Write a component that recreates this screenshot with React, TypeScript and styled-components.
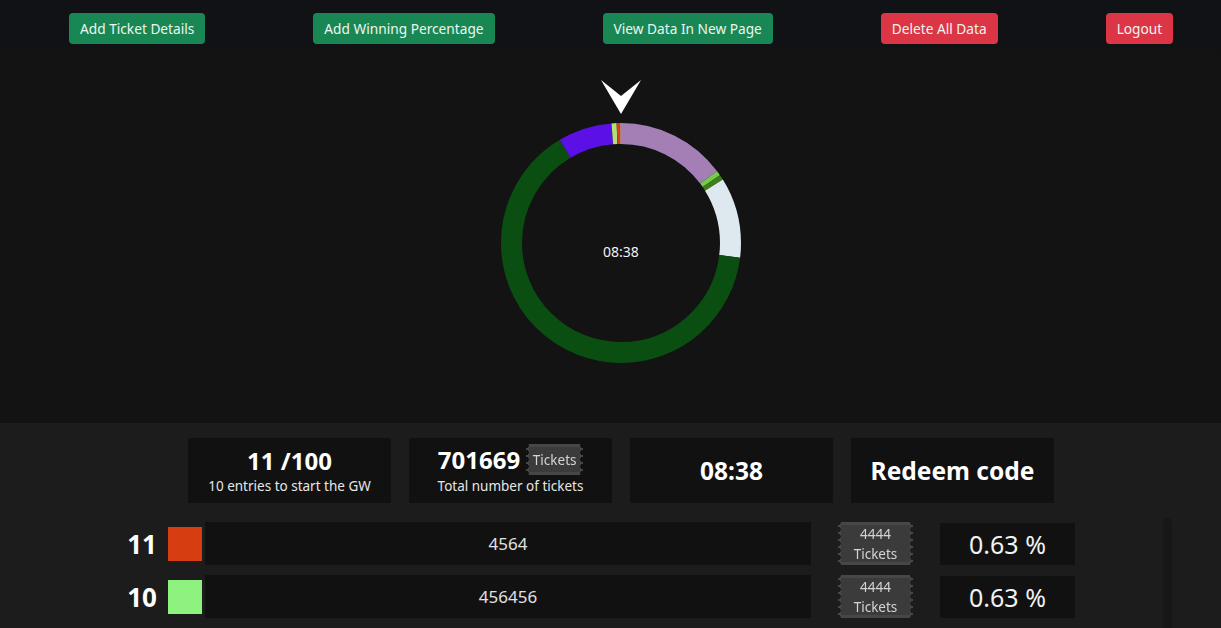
import styled, { createGlobalStyle } from "styled-components";

const GlobalStyle = createGlobalStyle`
  html, body {
    margin: 0;
    padding: 0;
    background: #131313;
    font-family: "Noto Sans", "Open Sans", sans-serif;
    color: #fff;
    overflow: hidden;
  }
  * { box-sizing: border-box; }
`;

const actions = [
  { label: "Add Ticket Details", tone: "success" },
  { label: "Add Winning Percentage", tone: "success" },
  { label: "View Data In New Page", tone: "success" },
  { label: "Delete All Data", tone: "danger" },
  { label: "Logout", tone: "danger" },
] as const;

// degrees, clockwise from top
const segments = [
  { from: 0, to: 53, color: "#a47fb6" },
  { from: 53, to: 55.5, color: "#74c94f" },
  { from: 55.5, to: 58, color: "#3f7d16" },
  { from: 58, to: 97, color: "#dde8ef" },
  { from: 97, to: 329, color: "#0a4e12" },
  { from: 329, to: 355, color: "#5b10e6" },
  { from: 355, to: 357.5, color: "#b3df78" },
  { from: 357.5, to: 359.4, color: "#dc3a18" },
  { from: 359.4, to: 360, color: "#f2eeee" },
];

const entries = [
  { no: 11, color: "#d63d10", value: "4564", tickets: 4444, pct: "0.63 %" },
  { no: 10, color: "#8ef27e", value: "456456", tickets: 4444, pct: "0.63 %" },
];

const RADIUS = 109.5;
const CIRC = 2 * Math.PI * RADIUS;

const Donut = () => (
  <DonutWrap>
    <svg width="240" height="240" viewBox="0 0 240 240">
      <g transform="rotate(-90 120 120)">
        {segments.map((s) => {
          const len = ((s.to - s.from) / 360) * CIRC;
          const offset = -(s.from / 360) * CIRC;
          return (
            <circle
              key={s.from}
              cx="120"
              cy="120"
              r={RADIUS}
              fill="none"
              stroke={s.color}
              strokeWidth="21"
              strokeDasharray={`${len} ${CIRC}`}
              strokeDashoffset={offset}
            />
          );
        })}
      </g>
    </svg>
    <DonutLabel>08:38</DonutLabel>
  </DonutWrap>
);

const App = () => {
  return (
    <>
      <GlobalStyle />
      <Page>
        <Header>
          {actions.map((a) => (
            <ActionButton key={a.label} $tone={a.tone}>
              {a.label}
            </ActionButton>
          ))}
        </Header>

        <ChartArea>
          <Pointer width="42" height="35" viewBox="0 0 42 35">
            <polygon points="1,0 21,16 41,0 21,34" fill="#ffffff" />
          </Pointer>
          <Donut />
        </ChartArea>

        <Bottom>
          <Cards>
            <Card>
              <CardTitle>11 /100</CardTitle>
              <CardSub>10 entries to start the GW</CardSub>
            </Card>
            <Card>
              <TitleRow>
                <CardTitle>701669</CardTitle>
                <Ticket $w={57} $h={31}>Tickets</Ticket>
              </TitleRow>
              <CardSub>Total number of tickets</CardSub>
            </Card>
            <Card>
              <CardTitle $size={24.5}>08:38</CardTitle>
            </Card>
            <Card>
              <CardTitle $size={24.5}>Redeem code</CardTitle>
            </Card>
          </Cards>

          <ListArea>
            <Rows>
              {entries.map((e) => (
                <Row key={e.no}>
                  <RowNo>{e.no}</RowNo>
                  <Swatch $color={e.color} />
                  <ValueBar>{e.value}</ValueBar>
                  <Ticket $w={75} $h={43}>
                    {e.tickets}
                    <br />
                    Tickets
                  </Ticket>
                  <Percent>{e.pct}</Percent>
                </Row>
              ))}
            </Rows>
            <ScrollTrack />
          </ListArea>
        </Bottom>
      </Page>
    </>
  );
};

export default App;

const Page = styled.div`
  width: 1221px;
  height: 628px;
  display: flex;
  flex-direction: column;
  background: #131313;
`;

const Header = styled.header`
  height: 57px;
  display: flex;
  align-items: flex-start;
  gap: 108px;
  padding: 13px 0 0 69px;
  background: linear-gradient(#111215 0%, #111215 80%, #131313 100%);
`;

const ActionButton = styled.button<{ $tone: "success" | "danger" }>`
  height: 31px;
  padding: 0 11px;
  border: none;
  border-radius: 4px;
  font-family: "Noto Sans", sans-serif;
  font-size: 13.7px;
  color: #eef5f0;
  background: ${({ $tone }) => ($tone === "success" ? "#198754" : "#dc3545")};
  cursor: pointer;
`;

const ChartArea = styled.section`
  height: 366px;
  display: flex;
  flex-direction: column;
  align-items: center;
  padding: 23px 0 0 21px;
  gap: 8px;
`;

const Pointer = styled.svg`
  display: block;
`;

const DonutWrap = styled.div`
  position: relative;
  width: 240px;
  height: 240px;

  svg {
    display: block;
  }
`;

const DonutLabel = styled.span`
  position: absolute;
  left: 0;
  right: 0;
  top: 119px;
  text-align: center;
  font-size: 14px;
  line-height: 20px;
  color: #f2f2f2;
`;

const Bottom = styled.section`
  flex: 1;
  background: #1c1c1c;
  padding-top: 15px;
  display: flex;
  flex-direction: column;
  gap: 19px;
`;

const Cards = styled.div`
  display: flex;
  justify-content: center;
  gap: 18px;
  padding-left: 21px;
`;

const Card = styled.div`
  width: 203px;
  height: 65px;
  background: #111111;
  display: flex;
  flex-direction: column;
  align-items: center;
  justify-content: center;
`;

const TitleRow = styled.div`
  display: flex;
  align-items: center;
  gap: 6px;
  margin-top: -2px;
`;

const CardTitle = styled.div<{ $size?: number }>`
  font-size: ${({ $size }) => $size ?? 24}px;
  font-weight: 700;
  line-height: 28px;
  color: #ffffff;
`;

const CardSub = styled.div`
  font-size: 13.5px;
  line-height: 18px;
  margin-top: 2px;
  color: #e6e6e6;
`;

const Ticket = styled.div<{ $w: number; $h: number }>`
  width: ${({ $w }) => $w}px;
  height: ${({ $h }) => $h}px;
  display: flex;
  align-items: center;
  justify-content: center;
  text-align: center;
  font-size: 13.5px;
  line-height: 20px;
  color: #d4d4d4;
  background: #3b3b3b;
  box-shadow: inset 0 0 0 3px #474747;
  -webkit-mask:
    radial-gradient(circle at 0 50%, transparent 2.5px, #000 3px) left / 51% 7px repeat-y,
    radial-gradient(circle at 100% 50%, transparent 2.5px, #000 3px) right / 51% 7px repeat-y;
  mask:
    radial-gradient(circle at 0 50%, transparent 2.5px, #000 3px) left / 51% 7px repeat-y,
    radial-gradient(circle at 100% 50%, transparent 2.5px, #000 3px) right / 51% 7px repeat-y;
`;

const ListArea = styled.div`
  display: flex;
  justify-content: space-between;
  padding: 0 49px 0 117px;
  flex: 1;
  margin-top: -4px;
`;

const Rows = styled.div`
  display: flex;
  flex-direction: column;
  gap: 10px;
  padding-top: 4px;
`;

const Row = styled.div`
  display: flex;
  align-items: center;
  height: 43px;
`;

const RowNo = styled.div`
  width: 40px;
  text-align: right;
  font-size: 26px;
  font-weight: 700;
  color: #ffffff;
  margin-right: 11px;
`;

const Swatch = styled.div<{ $color: string }>`
  width: 34px;
  height: 34px;
  background: ${({ $color }) => $color};
  margin-right: 3px;
`;

const ValueBar = styled.div`
  width: 606px;
  height: 43px;
  background: #111111;
  display: flex;
  align-items: center;
  justify-content: center;
  font-size: 17px;
  color: #e0e0e0;
  margin-right: 27px;
`;

const Percent = styled.div`
  width: 135px;
  height: 42px;
  margin-left: 27px;
  background: #111111;
  display: flex;
  align-items: center;
  justify-content: center;
  font-size: 25px;
  font-weight: 400;
  color: #f2f2f2;
`;

const ScrollTrack = styled.div`
  width: 9px;
  align-self: stretch;
  background: #171717;
  border-radius: 5px 5px 0 0;
`;
